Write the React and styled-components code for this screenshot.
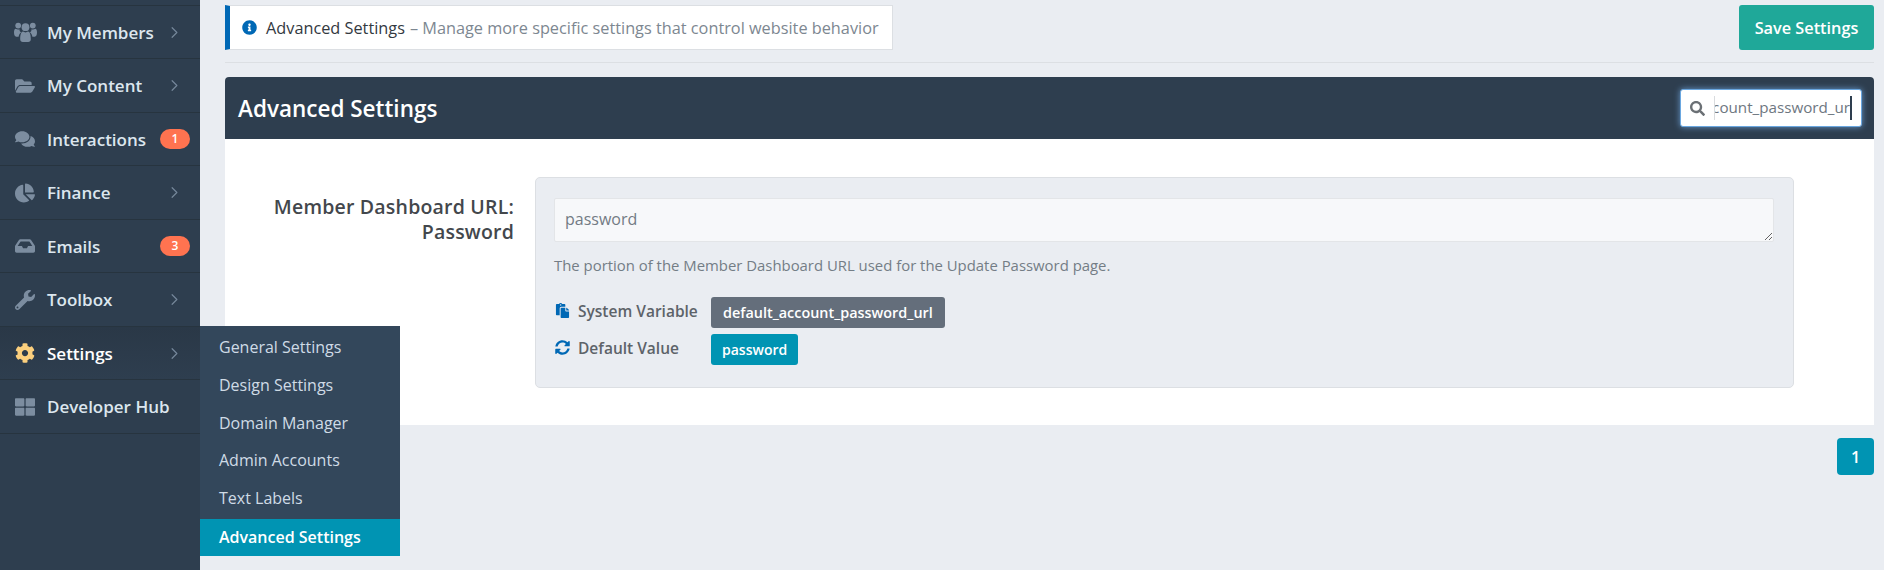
import React from 'react';
import styled, { createGlobalStyle } from 'styled-components';
import { ChevronRight } from 'lucide-react';
import {
  FaFolderOpen,
  FaComments,
  FaChartPie,
  FaInbox,
  FaWrench,
  FaCog,
  FaThLarge,
  FaInfoCircle,
  FaSearch,
  FaPaste,
  FaSyncAlt,
} from 'react-icons/fa';

const GlobalStyle = createGlobalStyle`
  html, body {
    margin: 0;
    height: 100%;
    overflow: hidden;
    background: #eaedf2;
    font-family: 'Open Sans', 'Lato', sans-serif;
  }
  * { box-sizing: border-box; }
`;

const Page = styled.div`
  display: flex;
  height: 570px;
`;

const Sidebar = styled.nav`
  flex: 0 0 200px;
  height: 570px;
  padding-top: 5px;
  background: #2e3e4f;
`;

const NavList = styled.div`
  border-top: 1px solid #27343f;
`;

const NavItem = styled.div`
  position: relative;
  display: flex;
  align-items: center;
  height: 53.45px;
  padding: 0.5px 10px 0 14px;
  border-bottom: 1px solid #27343f;
  color: ${p => (p.$active ? '#ffffff' : '#dce6ee')};
  background: ${p => (p.$active ? 'linear-gradient(#2a3847, #2e3e4f)' : 'transparent')};
  font-size: 17px;
  font-weight: 600;
`;

const NavIcon = styled.span`
  display: flex;
  justify-content: center;
  flex: 0 0 22px;
  min-width: 0;
  margin-right: 11px;
  font-size: 20px;
  color: ${p => (p.$active ? '#fbcf7d' : '#7c8da0')};
`;

const NavLabel = styled.span`
  flex: 1;
  white-space: nowrap;
`;

const Chevron = styled(ChevronRight)`
  width: 19px;
  height: 19px;
  margin-right: 6px;
  color: #75879a;
`;

const Badge = styled.span`
  width: 30px;
  height: 20px;
  border-radius: 10px;
  background: #ff7350;
  color: #fff;
  font-size: 12px;
  line-height: 20px;
  text-align: center;
`;

const Flyout = styled.div`
  position: absolute;
  z-index: 5;
  left: 100%;
  top: -1px;
  width: 200px;
  padding-top: 3px;
  background: #33475b;
`;

const FlyoutLink = styled.div`
  display: flex;
  align-items: center;
  height: ${p => (p.$active ? '37px' : '37.6px')};
  margin-top: ${p => (p.$active ? '2px' : '0')};
  padding-left: 19px;
  background: ${p => (p.$active ? '#0094b3' : 'transparent')};
  color: ${p => (p.$active ? '#ffffff' : '#cfdbe6')};
  font-size: 16px;
  font-weight: ${p => (p.$active ? 600 : 400)};
`;

const Main = styled.main`
  flex: 1;
  min-width: 0;
  padding: 5px 10px 0 25px;
`;

const TopBar = styled.div`
  display: flex;
  justify-content: space-between;
  height: 45px;
`;

const Notice = styled.div`
  display: flex;
  align-items: center;
  width: 668px;
  padding-left: 12px;
  background: #fff;
  border: 1px solid #dcdfe3;
  border-left: 5px solid #0068b5;
  font-size: 16.3px;
  white-space: nowrap;
`;

const NoticeIcon = styled(FaInfoCircle)`
  flex: none;
  margin-right: 9px;
  font-size: 15px;
  color: #0068b5;
`;

const NoticeTitle = styled.span`
  color: #33393f;
`;

const NoticeText = styled.span`
  margin-left: 5px;
  color: #7d8791;
`;

const SaveButton = styled.button`
  width: 135px;
  border: 0;
  border-radius: 3px;
  background: #1fa899;
  color: #fff;
  font: 600 16.3px 'Open Sans', sans-serif;
`;

const Rule = styled.div`
  height: 1px;
  margin: 12px 0 14px;
  background: #dcdfe3;
`;

const Panel = styled.section`
  background: #fff;
  border-radius: 4px 4px 0 0;
`;

const PanelHeader = styled.header`
  display: flex;
  align-items: center;
  justify-content: space-between;
  height: 62px;
  padding: 0 12px 0 13px;
  background: #2e3e4f;
  border-radius: 4px 4px 0 0;
`;

const PanelTitle = styled.h2`
  margin: 0;
  color: #fff;
  font-size: 22.5px;
  font-weight: 600;
`;

const SearchBox = styled.div`
  display: flex;
  align-items: center;
  width: 182px;
  height: 38px;
  padding: 0 9px;
  background: #fff;
  border: 1px solid #6aa7e0;
  border-radius: 3px;
  box-shadow: 0 0 6px rgba(120, 180, 240, 0.75);
`;

const SearchIcon = styled(FaSearch)`
  flex: none;
  font-size: 15px;
  color: #6b7075;
`;

const SearchField = styled.div`
  display: flex;
  justify-content: flex-end;
  flex: 1;
  min-width: 0;
  height: 24px;
  margin-left: 9px;
  border-left: 1px solid #d9dcdf;
  padding-left: 5px;
  overflow: hidden;
`;

const SearchValue = styled.span`
  flex: none;
  border-right: 2px solid #2e3e4f;
  color: #6e7781;
  font-size: 15.2px;
  line-height: 22px;
  white-space: nowrap;
`;

const FieldRow = styled.div`
  display: grid;
  grid-template-columns: 290px 1fr;
  column-gap: 20px;
  padding: 38px 80px 37px 0;
`;

const FieldLabel = styled.label`
  padding: 17px 1px 0 0;
  color: #43474c;
  font-size: 19.5px;
  font-weight: 600;
  letter-spacing: 0.2px;
  line-height: 25px;
  text-align: right;
`;

const FieldCard = styled.div`
  height: 211px;
  padding: 20px 19px 20px 18px;
  background: #eaedf2;
  border: 1px solid #dcdfe3;
  border-radius: 5px;
`;

const TextArea = styled.textarea`
  display: block;
  width: 100%;
  height: 44px;
  padding: 9px 10px;
  background: #f7f8fa;
  border: 1px solid #e3e5e8;
  border-radius: 2px;
  color: #737b84;
  font: 400 16px 'Open Sans', sans-serif;
  outline: none;
`;

const HelpText = styled.p`
  margin: 14px 0 22px;
  color: #747d86;
  font-size: 14.9px;
  line-height: 19px;
`;

const MetaRow = styled.div`
  display: flex;
  align-items: center;
  height: 31px;
  margin-bottom: 6px;
`;

const MetaIcon = styled.span`
  display: flex;
  justify-content: center;
  flex: 0 0 17px;
  margin: -4px 7px 0 0;
  font-size: 15px;
  color: #0068b5;
`;

const MetaLabel = styled.span`
  flex: 0 0 133px;
  margin-top: -4px;
  color: #5d6369;
  font-size: 15.5px;
  font-weight: 600;
  white-space: nowrap;
`;

const Tag = styled.span`
  display: flex;
  align-items: center;
  height: 31px;
  padding: 0 ${p => (p.$tone === 'teal' ? '11px' : '12px')};
  border-radius: 3px;
  background: ${p => (p.$tone === 'teal' ? '#0094b3' : '#646e7b')};
  color: #fff;
  font-size: ${p => (p.$tone === 'teal' ? '14px' : '14.4px')};
  font-weight: 600;
`;

const Pagination = styled.div`
  display: flex;
  justify-content: flex-end;
  margin-top: 13px;
`;

const PageButton = styled.button`
  width: 37px;
  height: 37px;
  border: 0;
  border-radius: 4px;
  background: #0094b3;
  color: #fff;
  font: 600 16px 'Open Sans', sans-serif;
`;

// the group icon in the reference is wider than the one in the icon package
const UsersIcon = () => (
  <svg width="23" height="20" viewBox="0 0 23 20" fill="currentColor" style={{ flex: 'none' }}>
    <circle cx="11.5" cy="5.2" r="3.9" />
    <circle cx="4.2" cy="3.6" r="2.9" />
    <circle cx="18.8" cy="3.6" r="2.9" />
    <path d="M6.2 17.2c0-4.4 1-7.6 2.8-7.6 1.4 1.1 3.6 1.1 5 0 1.8 0 2.8 3.2 2.8 7.6 0 1.7-1.1 2.8-2.6 2.8H8.8c-1.5 0-2.6-1.1-2.6-2.8z" />
    <path d="M0 10.6c0-2.6.6-3.9 1.8-3.9 1 .9 2.6 1 3.7.5-.1 1.5.5 2.5 1.5 3.2-1.3.7-2.1 2.4-2.4 4.3H2.2C.9 14.7 0 13.2 0 10.6z" />
    <path d="M23 10.6c0-2.6-.6-3.9-1.8-3.9-1 .9-2.6 1-3.7.5.1 1.5-.5 2.5-1.5 3.2 1.3.7 2.1 2.4 2.4 4.3h2.4c1.3 0 2.2-1.5 2.2-4.1z" />
  </svg>
);

const NAV_ITEMS = [
  { label: 'My Members', icon: UsersIcon },
  { label: 'My Content', icon: FaFolderOpen },
  { label: 'Interactions', icon: FaComments, badge: 1 },
  { label: 'Finance', icon: FaChartPie },
  { label: 'Emails', icon: FaInbox, badge: 3 },
  { label: 'Toolbox', icon: FaWrench },
  { label: 'Settings', icon: FaCog, active: true },
  { label: 'Developer Hub', icon: FaThLarge, plain: true },
];

const SETTINGS_LINKS = [
  'General Settings',
  'Design Settings',
  'Domain Manager',
  'Admin Accounts',
  'Text Labels',
];

const App = () => (
  <Page>
    <GlobalStyle />
    <Sidebar>
      <NavList>
        {NAV_ITEMS.map(({ label, icon: Icon, badge, active, plain }) => (
          <NavItem key={label} $active={active}>
            <NavIcon $active={active}>
              <Icon />
            </NavIcon>
            <NavLabel>{label}</NavLabel>
            {badge && <Badge>{badge}</Badge>}
            {!badge && !plain && <Chevron strokeWidth={1.5} />}
            {active && (
              <Flyout>
                {SETTINGS_LINKS.map(link => (
                  <FlyoutLink key={link}>{link}</FlyoutLink>
                ))}
                <FlyoutLink $active>Advanced Settings</FlyoutLink>
              </Flyout>
            )}
          </NavItem>
        ))}
      </NavList>
    </Sidebar>
    <Main>
      <TopBar>
        <Notice>
          <NoticeIcon />
          <NoticeTitle>Advanced Settings</NoticeTitle>
          <NoticeText>– Manage more specific settings that control website behavior</NoticeText>
        </Notice>
        <SaveButton>Save Settings</SaveButton>
      </TopBar>
      <Rule />
      <Panel>
        <PanelHeader>
          <PanelTitle>Advanced Settings</PanelTitle>
          <SearchBox>
            <SearchIcon />
            <SearchField>
              <SearchValue>default_account_password_ur</SearchValue>
            </SearchField>
          </SearchBox>
        </PanelHeader>
        <FieldRow>
          <FieldLabel>
            Member Dashboard URL:
            <br />
            Password
          </FieldLabel>
          <FieldCard>
            <TextArea defaultValue="password" />
            <HelpText>The portion of the Member Dashboard URL used for the Update Password page.</HelpText>
            <MetaRow>
              <MetaIcon>
                <FaPaste />
              </MetaIcon>
              <MetaLabel>System Variable</MetaLabel>
              <Tag>default_account_password_url</Tag>
            </MetaRow>
            <MetaRow>
              <MetaIcon>
                <FaSyncAlt />
              </MetaIcon>
              <MetaLabel>Default Value</MetaLabel>
              <Tag $tone="teal">password</Tag>
            </MetaRow>
          </FieldCard>
        </FieldRow>
      </Panel>
      <Pagination>
        <PageButton>1</PageButton>
      </Pagination>
    </Main>
  </Page>
);

export default App;
